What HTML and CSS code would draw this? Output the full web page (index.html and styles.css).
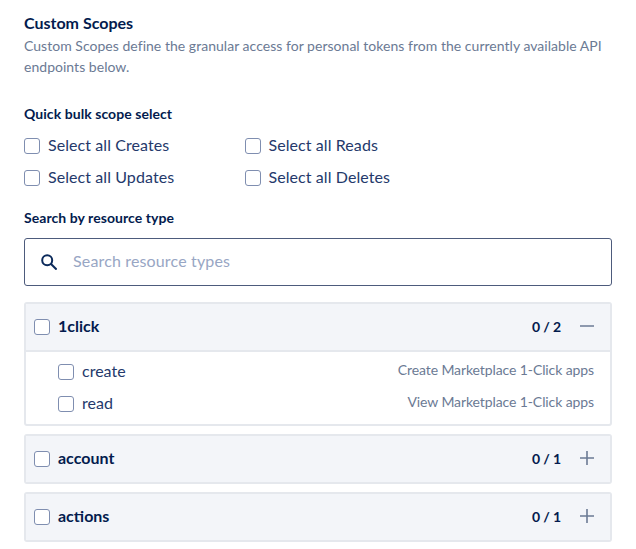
FILE: index.html
```html
<!DOCTYPE html>
<html lang="en">
<head>
<meta charset="utf-8">
<title>Custom Scopes</title>
<link rel="stylesheet" href="styles.css">
</head>
<body>
<main class="page">
  <h2 class="title">Custom Scopes</h2>
  <p class="desc">Custom Scopes define the granular access for personal tokens from the currently available API endpoints below.</p>

  <h3 class="label bulk-label">Quick bulk scope select</h3>
  <div class="bulk">
    <label class="check"><span class="box"></span><span class="check-text">Select all Creates</span></label>
    <label class="check"><span class="box"></span><span class="check-text">Select all Reads</span></label>
    <label class="check"><span class="box"></span><span class="check-text">Select all Updates</span></label>
    <label class="check"><span class="box"></span><span class="check-text">Select all Deletes</span></label>
  </div>

  <h3 class="label search-label">Search by resource type</h3>
  <div class="search">
    <svg class="search-icon" width="16" height="16" viewBox="0 0 16 16" fill="none" stroke="#0b2a5b" stroke-width="2"><circle cx="6.2" cy="6.2" r="5"/><path d="M9.8 9.8 15.6 15.6"/></svg>
    <span class="placeholder">Search resource types</span>
  </div>

  <section class="panel">
    <header class="head">
      <span class="box"></span><span class="name">1click</span>
      <span class="count">0 / 2</span>
      <svg class="toggle" width="14" height="14" viewBox="0 0 14 14" stroke="#6b7a94" stroke-width="1.6"><path d="M0 7H14"/></svg>
    </header>
    <div class="rows">
      <div class="row"><span class="box"></span><span class="scope">create</span><span class="info">Create Marketplace 1-Click apps</span></div>
      <div class="row"><span class="box"></span><span class="scope">read</span><span class="info">View Marketplace 1-Click apps</span></div>
    </div>
  </section>

  <section class="panel">
    <header class="head">
      <span class="box"></span><span class="name">account</span>
      <span class="count">0 / 1</span>
      <svg class="toggle" width="14" height="14" viewBox="0 0 14 14" stroke="#6b7a94" stroke-width="1.6"><path d="M0 7H14M7 0V14"/></svg>
    </header>
  </section>

  <section class="panel">
    <header class="head">
      <span class="box"></span><span class="name">actions</span>
      <span class="count">0 / 1</span>
      <svg class="toggle" width="14" height="14" viewBox="0 0 14 14" stroke="#6b7a94" stroke-width="1.6"><path d="M0 7H14M7 0V14"/></svg>
    </header>
  </section>
</main>
</body>
</html>
```
FILE: styles.css
```css
* { box-sizing: border-box; }
html, body { margin: 0; background: #fff; }
body {
  font-family: "Lato", "Liberation Sans", sans-serif;
  color: #0b2a5b;
  overflow: hidden;
  height: 549px;
}
.page { padding: 13px 24px 0; width: 636px; }
.title { margin: 0; font-size: 16px; line-height: 20px; font-weight: 700; color: #031b4e; }
.desc { margin: 2px 0 0; font-size: 14px; line-height: 21px; letter-spacing: .03px; color: #6b7a94; }
.label { margin: 0; font-size: 14px; line-height: 18px; font-weight: 700; letter-spacing: .06px; color: #031b4e; }
.bulk-label { margin-top: 28px; }
.bulk { display: grid; grid-template-columns: 220.5px 1fr; row-gap: 8px; margin-top: 11px; }
.check { display: flex; align-items: center; gap: 8px; height: 24px; font-size: 16px; color: #24396b; }
.check-text { padding-bottom: 4px; letter-spacing: .08px; }
.box { flex: none; width: 16px; height: 16px; background: #fff; border: 1px solid #7f8eb0; border-radius: 3px; }
.search-label { margin-top: 19px; }
.search {
  display: flex; align-items: center; height: 48px; margin-top: 11px;
  border: 1px solid #4d5b7c; border-radius: 3px; padding-left: 16px;
}
.search-icon { flex: none; }
.placeholder { margin-left: 16px; padding-bottom: 4px; font-size: 16px; letter-spacing: .15px; color: #98a6c4; }
.panel { margin-top: 8px; border: 2px solid #e5e8ed; border-radius: 3px; overflow: hidden; }
.search + .panel { margin-top: 16px; }
.head { display: flex; align-items: center; height: 46px; padding: 0 16px 0 8px; background: #f3f5f9; }
.name { margin-left: 8px; padding-bottom: 4px; font-size: 16px; font-weight: 700; color: #031b4e; }
.count { margin-left: auto; width: 28px; padding-bottom: 2px; font-size: 14px; font-weight: 700; letter-spacing: -.1px; white-space: nowrap; color: #031b4e; }
.toggle { margin: 0 0 2px 20px; flex: none; }
.rows { border-top: 2px solid #e5e8ed; padding: 4px 16px 4px 32px; }
.row { display: flex; align-items: center; height: 32px; }
.scope { margin-left: 8px; padding-bottom: 3px; font-size: 16px; color: #24396b; }
.info { margin-left: auto; padding-bottom: 5px; font-size: 14px; letter-spacing: -.1px; color: #6b7a94; }
```
